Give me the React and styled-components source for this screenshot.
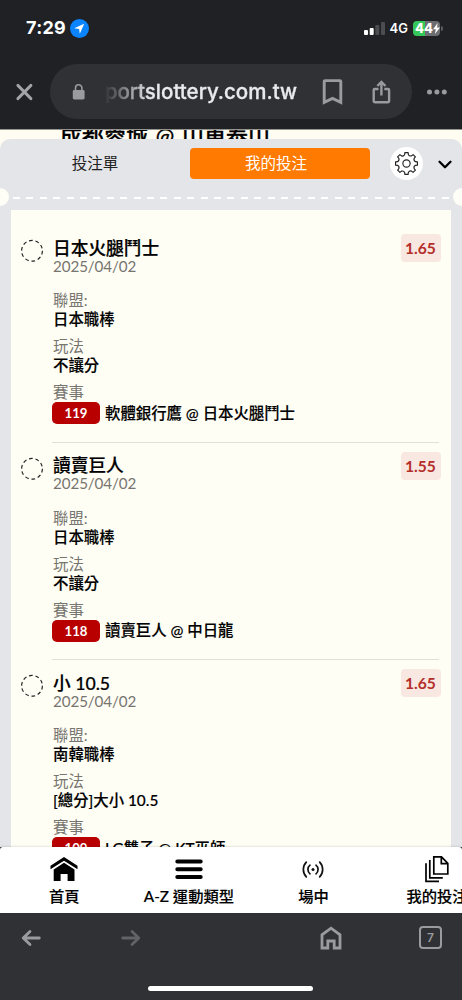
import React from "react";
import styled, { createGlobalStyle } from "styled-components";

const GlobalStyle = createGlobalStyle`
  * { box-sizing: border-box; }
  body {
    margin: 0;
    background: #303134;
    font-family: Lato, "Noto Sans CJK TC", sans-serif;
    color: #000;
  }
  svg { display: block; flex: none; }
`;

const Screen = styled.div`
  width: 462px;
  height: 1000px;
  display: flex;
  flex-direction: column;
  overflow: hidden;
`;

const BrowserTop = styled.header`
  height: 129px;
  flex: none;
  background: #202125;
  font-family: Inter, sans-serif;
`;

const StatusBar = styled.div`
  height: 64px;
  padding: 0 22px 8px 26px;
  display: flex;
  align-items: center;
  color: #fff;
`;

const Clock = styled.span`
  width: 44px;
  font-size: 18px;
  line-height: 22px;
  font-weight: 700;
  letter-spacing: 0.3px;
  white-space: nowrap;
`;

const Network = styled.span`
  margin: 0 5px 0 auto;
  display: flex;
  align-items: center;
  gap: 5px;
  font-size: 13px;
  font-weight: 600;
`;

const Battery = styled.span`
  width: 27px;
  height: 15px;
  border-radius: 4px;
  display: flex;
  align-items: center;
  padding-left: 2px;
  font-size: 13px;
  font-weight: 800;
  background: linear-gradient(90deg, #35c759 46%, #6c6d70 46%);
`;

const BatteryTip = styled.i`
  width: 2px;
  height: 5px;
  margin: 0 -3px 0 1px;
  border-radius: 0 2px 2px 0;
  background: #5c5d60;
`;

const AddressRow = styled.div`
  display: flex;
  align-items: center;
  padding: 0 14px 0 15px;
`;

const AddressPill = styled.div`
  width: 362px;
  height: 55px;
  margin: 0 14px 0 16px;
  padding: 0 20px 0 22px;
  border-radius: 28px;
  background: #303134;
  display: flex;
  align-items: center;
`;

const Url = styled.span`
  width: 194px;
  margin: 0 25px 0 18px;
  overflow: hidden;
  display: flex;
  justify-content: flex-end;
  white-space: nowrap;
  color: #e8eaed;
  font-size: 20.5px;
  line-height: 28px;
  font-weight: 500;
  -webkit-text-stroke: 0.3px #e8eaed;
  mask-image: linear-gradient(90deg, transparent 0, #000 46px);
`;

const PageStrip = styled.div`
  height: 10px;
  flex: none;
  background: #fffdf2;
  border-top: 1px solid #96958f;
`;

const Match = styled.div`
  height: 9px;
  overflow: hidden;
  padding-left: 60px;
  white-space: nowrap;
  font-size: 22px;
  font-weight: 500;

  span {
    display: block;
    line-height: 26px;
    margin-top: -7px;
    word-spacing: 2.2px;
    -webkit-text-stroke: 0.3px #000;
  }
`;

const SlipBack = styled.div`
  flex: 1;
  min-height: 0;
  background: #fffdf2;
  display: flex;
`;

const Slip = styled.main`
  flex: 1;
  min-height: 0;
  border-radius: 10px 10px 0 0;
  background: #e4e5e8;
  display: flex;
  flex-direction: column;
  overflow: hidden;
`;

const Tabs = styled.div`
  height: 49px;
  flex: none;
  display: flex;
  align-items: center;
  padding-right: 9px;
`;

const Tab = styled.div`
  width: ${(p) => (p.$active ? 180.5 : 190)}px;
  height: 31px;
  line-height: 30px;
  border-radius: 4px;
  text-align: center;
  font-size: 15.5px;
  padding-right: ${(p) => (p.$active ? 8 : 0)}px;
  color: ${(p) => (p.$active ? "#fff" : "#222")};
  background: ${(p) => (p.$active ? "#ff7a00" : "transparent")};
`;

const GearButton = styled.div`
  width: 33px;
  height: 33px;
  margin: 0 14px 0 20px;
  border-radius: 50%;
  background: #fff;
  display: flex;
  align-items: center;
  justify-content: center;
`;

const Perforation = styled.div`
  position: relative;
  height: 22px;
  flex: none;
  padding: 9px 12px 0 13px;

  &::before,
  &::after {
    content: "";
    position: absolute;
    top: 0;
    width: 18px;
    height: 18px;
    border-radius: 50%;
    background: #fffef6;
  }
  &::before { left: -9px; }
  &::after { right: -9px; }
`;

const Dashes = styled.div`
  height: 2px;
  background: repeating-linear-gradient(90deg, #fff 0 7px, transparent 7px 13.4px);
`;

const Card = styled.section`
  flex: 1;
  min-height: 0;
  margin: 0 11px;
  padding: 15px 12px 0 10px;
  background: #fffef5;
  overflow: hidden;
`;

const Bet = styled.article`
  height: 217.5px;
  display: flex;
`;

const BetBody = styled.div`
  flex: 1;
  margin-left: 7px;
  padding: 13.6px 0 0 1px;
  border-bottom: 1px solid #e2dfd8;
`;

const BetTop = styled.div`
  display: flex;
  justify-content: space-between;
  height: 38px;
`;

const BetTitle = styled.h2`
  margin: 0;
  font-size: 17.7px;
  line-height: 20px;
  font-weight: 500;
  -webkit-text-stroke: 0.2px #000;
`;

const BetDate = styled.div`
  margin-top: -1.7px;
  font-size: 15.2px;
  letter-spacing: -0.1px;
  line-height: 18px;
  color: #777570;
`;

const Odds = styled.div`
  width: 40px;
  height: 28px;
  margin: -4.4px -1.5px 0 0;
  border-radius: 4px;
  background: #f8e8e1;
  color: #b42e2a;
  font-size: 15.6px;
  line-height: 28px;
  font-weight: 700;
  text-align: center;
`;

const Fields = styled.div`
  display: flex;
  flex-direction: column;
  gap: 8px;
  padding-top: 14.5px;
  font-size: 15.4px;
  line-height: 19px;
`;

const Label = styled.div`
  height: 19px;
  color: #777570;
`;

const Value = styled.div`
  height: ${(p) => (p.$match ? 22 : 19)}px;
  display: flex;
  align-items: center;
  gap: 5px;
  white-space: nowrap;
  font-weight: 500;
  -webkit-text-stroke: 0.15px #000;
`;

const Code = styled.span`
  width: 48px;
  height: 22px;
  margin-left: -1px;
  border-radius: 5px;
  background: #b80000;
  color: #fff;
  text-align: center;
  font-size: 13.2px;
  line-height: 22px;
  font-weight: 700;
  -webkit-text-stroke: 0;
`;

const SiteNav = styled.nav`
  position: relative;
  height: 66px;
  flex: none;
  padding: 7px 0 0 2px;
  background: #fff;
  border-radius: 3px 3px 0 0;
  box-shadow: 0 -1px 2px rgba(0, 0, 0, 0.1);
  display: flex;
`;

const NavItem = styled.div`
  width: 124.6px;
  flex: none;
  display: flex;
  flex-direction: column;
  align-items: center;
  font-size: 15.3px;
  font-weight: 500;
  white-space: nowrap;
  -webkit-text-stroke: 0.15px #000;

  &:last-child { margin-left: -1px; }
  svg { height: 30px; }
  span { line-height: 24px; }
`;

const BrowserBottom = styled.footer`
  height: 87px;
  flex: none;
  background: #303134;
  display: flex;
  flex-direction: column;
  align-items: center;
`;

const Controls = styled.div`
  width: 100%;
  height: 72.5px;
  padding: 0 18px 23px 21px;
  display: flex;
  align-items: center;
`;

const Spacer = styled.div`
  width: ${(p) => p.$w}px;
`;

const TabCount = styled.div`
  width: 23px;
  height: 23px;
  border: 2px solid #9a9b9f;
  border-radius: 4px;
  color: #9a9b9f;
  font: 600 12px/19px Inter, sans-serif;
  text-align: center;
`;

const HomeIndicator = styled.div`
  width: 165px;
  height: 5.5px;
  margin-right: 1px;
  border-radius: 3px;
  background: #fff;
`;

const DashedRing = styled.svg`
  margin-top: 14px;
`;

const ShareIcon = styled.svg`
  margin-left: 28px;
`;

const Pending = () => (
  <DashedRing width="24" height="24" viewBox="0 0 24 24">
    <circle cx="11" cy="11.8" r="10.4" fill="none" stroke="#222" strokeWidth="1.2" strokeDasharray="3.7 2.83" />
  </DashedRing>
);

const gearPath = (() => {
  const at = (a, r) => `${(12 + r * Math.cos(a)).toFixed(2)} ${(12 + r * Math.sin(a)).toFixed(2)}`;
  let d = "";
  for (let i = 0; i < 8; i++) {
    const a = (i * Math.PI) / 4 - Math.PI / 2;
    d += `${i ? "L" : "M"}${at(a - 0.15, 10.6)}L${at(a + 0.15, 10.6)}L${at(a + 0.2, 8.8)}Q${at(a + 0.39, 7.2)} ${at(a + 0.585, 8.8)}`;
  }
  return `${d}Z`;
})();

const Gear = () => (
  <svg width="25" height="25" viewBox="0 0 24 24" fill="none" stroke="#222" strokeWidth="1.1" strokeLinejoin="round">
    <path d={gearPath} />
    <circle cx="12" cy="12" r="3.5" />
  </svg>
);

const BETS = [
  { title: "日本火腿鬥士", odds: "1.65", league: "日本職棒", play: "不讓分", code: "119", match: "軟體銀行鷹 @ 日本火腿鬥士" },
  { title: "讀賣巨人", odds: "1.55", league: "日本職棒", play: "不讓分", code: "118", match: "讀賣巨人 @ 中日龍" },
  { title: "小 10.5", odds: "1.65", league: "南韓職棒", play: "[總分]大小 10.5", code: "109", match: "LG雙子 @ KT巫師" },
];

function BetEntry({ bet }) {
  return (
    <Bet>
      <Pending />
      <BetBody>
        <BetTop>
          <div>
            <BetTitle>{bet.title}</BetTitle>
            <BetDate>2025/04/02</BetDate>
          </div>
          <Odds>{bet.odds}</Odds>
        </BetTop>
        <Fields>
          <div><Label>聯盟:</Label><Value>{bet.league}</Value></div>
          <div><Label>玩法</Label><Value>{bet.play}</Value></div>
          <div>
            <Label>賽事</Label>
            <Value $match><Code>{bet.code}</Code><span>{bet.match}</span></Value>
          </div>
        </Fields>
      </BetBody>
    </Bet>
  );
}

export default function App() {
  return (
    <Screen>
      <GlobalStyle />
      <BrowserTop>
        <StatusBar>
          <Clock>7:29</Clock>
          <svg width="19" height="19" viewBox="0 0 19 19">
            <circle cx="9.5" cy="9.5" r="9.5" fill="#0a84ff" />
            <path d="M14.2 4.7 L4.2 9.2 L9.1 9.9 L9.8 14.8 Z" fill="#fff" />
          </svg>
          <Network>
            <svg width="21" height="13" viewBox="0 0 21 13">
              <rect x="0" y="8" width="4" height="5" rx="1" fill="#fff" />
              <rect x="5.7" y="6" width="4" height="7" rx="1" fill="#fff" />
              <rect x="11.3" y="3" width="4" height="10" rx="1" fill="#4c4d50" />
              <rect x="17" y="0" width="4" height="13" rx="1" fill="#4c4d50" />
            </svg>
            4G
          </Network>
          <Battery>
            44
            <svg width="7" height="11" viewBox="0 0 7 11"><path d="M4.7 0 L0 6.2 H2.8 L1.9 11 L7 4.5 H4 Z" fill="#fff" /></svg>
          </Battery>
          <BatteryTip />
        </StatusBar>
        <AddressRow>
          <svg width="19" height="18" viewBox="0 0 19 18">
            <path d="M3 2.5 L15.8 15.5 M15.8 2.5 L3 15.5" stroke="#a3a4a8" strokeWidth="3.2" strokeLinecap="round" />
          </svg>
          <AddressPill>
            <svg width="14" height="16" viewBox="0 0 14 16">
              <rect x="0.8" y="6" width="11.8" height="9.5" rx="1.4" fill="#9a9b9f" />
              <path d="M3.5 6.5 V4 a3.2 3.2 0 0 1 6.4 0 V6.5" fill="none" stroke="#9a9b9f" strokeWidth="1.6" />
            </svg>
            <Url>portslottery.com.tw</Url>
            <svg width="22" height="26" viewBox="0 0 22 26">
              <path d="M2.2 2.6 a1 1 0 0 1 1-1 H17.8 a1 1 0 0 1 1 1 V23.4 L10.5 19.4 L2.2 23.4 Z" fill="none" stroke="#9a9b9f" strokeWidth="2.9" />
            </svg>
            <ShareIcon width="20" height="26" viewBox="0 0 20 26" fill="none" stroke="#9a9b9f" strokeWidth="2.4">
              <path d="M6.5 10 H2.7 a1 1 0 0 0 -1 1 V21.7 a1.5 1.5 0 0 0 1.5 1.5 H15.6 a1.5 1.5 0 0 0 1.5 -1.5 V11 a1 1 0 0 0 -1 -1 H12.3" />
              <path d="M9.4 16.5 V3.5 M5.3 7 L9.4 2.9 L13.5 7" />
            </ShareIcon>
          </AddressPill>
          <svg width="21" height="6" viewBox="0 0 21 6" fill="#9a9b9f">
            <circle cx="3.5" cy="3" r="2.5" /><circle cx="10.9" cy="3" r="2.5" /><circle cx="18.3" cy="3" r="2.5" />
          </svg>
        </AddressRow>
      </BrowserTop>

      <PageStrip>
        <Match><span>成都蓉城 @ 山東泰山</span></Match>
      </PageStrip>

      <SlipBack>
        <Slip>
          <Tabs>
            <Tab>投注單</Tab>
            <Tab $active>我的投注</Tab>
            <GearButton><Gear /></GearButton>
            <svg width="16" height="12" viewBox="0 0 16 12">
              <path d="M2.5 3.8 L8 9.2 L13.5 3.8" fill="none" stroke="#000" strokeWidth="2.3" strokeLinecap="round" strokeLinejoin="round" />
            </svg>
          </Tabs>
          <Perforation><Dashes /></Perforation>
          <Card>
            {BETS.map((bet) => <BetEntry key={bet.title} bet={bet} />)}
          </Card>
        </Slip>
      </SlipBack>

      <SiteNav>
        <NavItem>
          <svg width="28" viewBox="0 0 28 30">
            <path d="M0.5 13.8 V11.8 L14 3 L27.5 11.8 V15.2 L14 6.8 L0.5 15.2 Z" />
            <path d="M14 8.8 L24.5 15.4 V27 H17.6 V20 H10.6 V27 H3.7 V15.4 Z" />
          </svg>
          <span>首頁</span>
        </NavItem>
        <NavItem>
          <svg width="28" viewBox="0 0 28 30">
            <path d="M2.3 7.5 H25.7 M2.3 15.3 H25.7 M2.3 23.1 H25.7" stroke="#000" strokeWidth="4" strokeLinecap="round" />
          </svg>
          <span>A-Z 運動類型</span>
        </NavItem>
        <NavItem>
          <svg width="22" viewBox="0 0 22 30" fill="none" stroke="#111" strokeWidth="1.7" strokeLinecap="round">
            <circle cx="11" cy="15.5" r="1.5" fill="#111" stroke="none" />
            <path d="M8 11.2 A5.5 5.5 0 0 0 8 19.8 M14 11.2 A5.5 5.5 0 0 1 14 19.8 M4.3 8.2 A10.5 10.5 0 0 0 4.3 22.8 M17.7 8.2 A10.5 10.5 0 0 1 17.7 22.8" />
          </svg>
          <span>場中</span>
        </NavItem>
        <NavItem>
          <svg width="24" viewBox="0 0 24 30" fill="none" stroke="#000" strokeWidth="1.7">
            <path d="M8.8 2.8 H16.5 L22.8 9.3 V20 H8.8 Z M16.3 3 V9.6 H22.6" />
            <path d="M4.8 6 V23.8 H17.8 M1 9.2 V27.3 H14" />
          </svg>
          <span>我的投注</span>
        </NavItem>
      </SiteNav>

      <BrowserBottom>
        <Controls>
          <svg width="20" height="18" viewBox="0 0 20 18" fill="none" stroke="#9a9b9f" strokeWidth="2.8" strokeLinecap="round" strokeLinejoin="round">
            <path d="M18.3 9 H2.5 M9 2.5 L2.2 9 L9 15.5" />
          </svg>
          <Spacer $w={80} />
          <svg width="20" height="18" viewBox="0 0 20 18" fill="none" stroke="#626366" strokeWidth="2.8" strokeLinecap="round" strokeLinejoin="round">
            <path d="M1.7 9 H17.5 M11 2.5 L17.8 9 L11 15.5" />
          </svg>
          <Spacer $w={178.5} />
          <svg width="22" height="24" viewBox="0 0 22 24" fill="none" stroke="#9a9b9f" strokeWidth="2.8">
            <path d="M2 22 V8.8 L11 2.2 L20 8.8 V22 H14.2 V15 H7.8 V22 Z" />
          </svg>
          <Spacer $w={77.5} />
          <TabCount>7</TabCount>
        </Controls>
        <HomeIndicator />
      </BrowserBottom>
    </Screen>
  );
}
